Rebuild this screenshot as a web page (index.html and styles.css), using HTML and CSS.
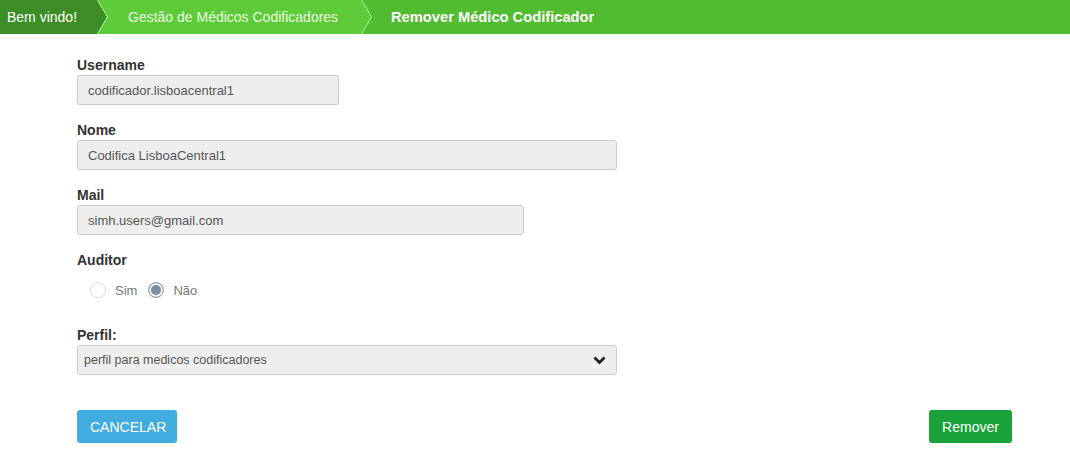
FILE: index.html
```html
<!DOCTYPE html>
<html lang="pt">
<head>
<meta charset="utf-8">
<title>Remover Médico Codificador</title>
<link rel="stylesheet" href="styles.css">
</head>
<body>
<nav class="crumbs">
  <div class="crumb crumb-home">Bem vindo!
    <svg class="crumb-arrow" width="12" height="34" viewBox="0 0 12 34"><polygon points="0,0 10,17 0,34" fill="#3d8d27"/><polyline points="0.5,0 10.5,17 0.5,34" fill="none" stroke="#b7f59a" stroke-width="1"/></svg>
  </div>
  <div class="crumb crumb-mid">Gestão de Médicos Codificadores
    <svg class="crumb-arrow" width="12" height="34" viewBox="0 0 12 34"><polygon points="0,0 10,17 0,34" fill="#5dcb37"/><polyline points="0.5,0 10.5,17 0.5,34" fill="none" stroke="#b7f59a" stroke-width="1"/></svg>
  </div>
  <div class="crumb crumb-current">Remover Médico Codificador</div>
</nav>

<form class="form">
  <div class="group">
    <label class="label">Username</label>
    <input class="field w-sm" type="text" value="codificador.lisboacentral1" readonly>
  </div>
  <div class="group">
    <label class="label">Nome</label>
    <input class="field w-lg" type="text" value="Codifica LisboaCentral1" readonly>
  </div>
  <div class="group">
    <label class="label">Mail</label>
    <input class="field w-md" type="text" value="simh.users@gmail.com" readonly>
  </div>
  <div class="group">
    <label class="label">Auditor</label>
    <div class="radios">
      <label class="radio"><input type="radio" name="aud" disabled><span>Sim</span></label>
      <label class="radio"><input type="radio" name="aud" checked disabled><span>Não</span></label>
    </div>
  </div>
  <div class="group group-perfil">
    <label class="label">Perfil:</label>
    <div class="select-wrap w-lg">
      <select class="field select" disabled>
        <option>perfil para medicos codificadores</option>
      </select>
      <svg class="select-chev" width="13" height="9" viewBox="0 0 13 9"><polyline points="1.5,1.5 6.5,6.5 11.5,1.5" fill="none" stroke="#222" stroke-width="2.8"/></svg>
    </div>
  </div>
  <div class="actions">
    <button type="button" class="btn btn-cancel">CANCELAR</button>
    <button type="button" class="btn btn-remove">Remover</button>
  </div>
</form>
</body>
</html>
```

FILE: styles.css
```css
* { box-sizing: border-box; }
html, body { margin: 0; padding: 0; background: #fff; }
body {
  font-family: "Liberation Sans", Arial, sans-serif;
  color: #333;
  width: 1070px;
  height: 474px;
  overflow: hidden;
}

.crumbs {
  display: flex;
  height: 34px;
  background: #52bc31;
}
.crumb {
  position: relative;
  display: flex;
  align-items: center;
  height: 34px;
  color: #fff;
  font-size: 14px;
  white-space: nowrap;
}
.crumb-home {
  background: #3d8d27;
  width: 98px;
  padding-left: 7px;
  z-index: 2;
}
.crumb-mid {
  background: #5dcb37;
  width: 264px;
  padding-left: 30px;
  color: #e9fbe0;
  z-index: 1;
}
.crumb-current {
  padding-left: 29px;
  font-weight: bold;
  font-size: 14.7px;
}
.crumb-arrow {
  position: absolute;
  top: 0;
  right: -11px;
}

.form {
  margin: 0 58px 0 77px;
  padding-top: 20px;
  display: flex;
  flex-direction: column;
}
.group {
  display: flex;
  flex-direction: column;
  align-items: flex-start;
  margin-bottom: 14px;
}
.label {
  font-size: 14px;
  line-height: 17px;
  font-weight: bold;
  color: #333;
  padding-top: 3px;
  margin-bottom: 1px;
}
.field {
  height: 30px;
  border: 1px solid #ccc;
  border-radius: 3px;
  background: #eee;
  color: #555;
  font-family: "Liberation Sans", Arial, sans-serif;
  font-size: 13px;
  padding: 0 10px;
  outline: none;
}
.w-sm { width: 262px; }
.w-md { width: 447px; }
.w-lg { width: 540px; }

.radios {
  display: flex;
  gap: 11px;
  padding: 11px 0 0 13px;
  height: 40px;
}
.radio {
  display: flex;
  align-items: center;
  gap: 9px;
  height: 18px;
  font-size: 13px;
  color: #777;
}
.radio input {
  appearance: none;
  -webkit-appearance: none;
  margin: 0;
  width: 16px;
  height: 16px;
  border-radius: 50%;
  border: 1px solid #dcdcdc;
  background: #fff;
}
.radio input:checked {
  border: 1px solid #9aa3ad;
  background: #7a8ca1;
  box-shadow: inset 0 0 0 2px #f4f4f4;
}

.group-perfil { margin-bottom: 35px; }
.select-wrap { position: relative; }
.select {
  width: 100%;
  appearance: none;
  -webkit-appearance: none;
  padding: 0 6px;
  font-size: 12.5px;
  opacity: 1;
}
.select-chev {
  position: absolute;
  right: 11px;
  top: 11px;
}

.actions {
  display: flex;
  justify-content: space-between;
}
.btn {
  height: 33px;
  border: none;
  border-radius: 3px;
  color: #fff;
  font-family: "Liberation Sans", Arial, sans-serif;
  font-size: 14px;
  padding: 0 13px;
}
.btn-cancel { background: #41ace0; width: 100px; }
.btn-remove { background: #19a239; width: 83px; }
```
